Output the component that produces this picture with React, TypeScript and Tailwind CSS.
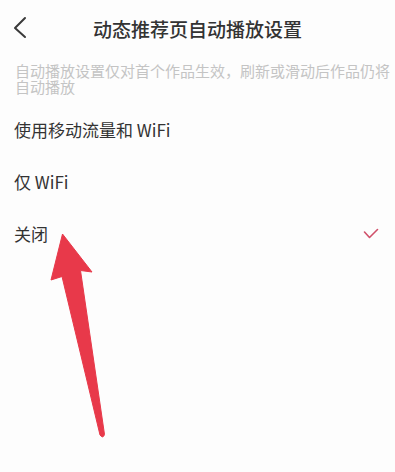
import React from "react";

const font = { fontFamily: '"Noto Sans CJK SC", "Noto Sans", sans-serif' };

export default function App() {
  return (
    <div className="relative w-[395px] h-[472px] bg-[#fdfdfd] overflow-hidden" style={font}>
      <div className="relative h-14 flex items-center justify-center">
        <svg className="absolute left-[12px] top-[16px]" width="16" height="24" viewBox="0 0 16 24">
          <polyline points="13,2 3,12 13,21" fill="none" stroke="#3a3a3a" strokeWidth="2" strokeLinecap="round" strokeLinejoin="round" />
        </svg>
        <span className="text-[19px] font-medium text-[#333333] leading-none">动态推荐页自动播放设置</span>
      </div>
      <div className="pt-[7px] pl-[15px] pr-[2px] text-[15px] leading-[16px] text-[#c4c4c4]">
        自动播放设置仅对首个作品生效，刷新或滑动后作品仍将自动播放
      </div>
      <div className="mt-[9px] flex flex-col">
        <div className="h-[52px] flex items-center px-[14px] text-[17px] text-[#333333]">使用移动流量和 WiFi</div>
        <div className="h-[52px] flex items-center px-[14px] text-[17px] text-[#333333]">仅 WiFi</div>
        <div className="h-[52px] flex items-center justify-between px-[14px] text-[17px] text-[#333333]">
          <span>关闭</span>
          <svg width="16" height="12" viewBox="0 0 16 12" className="mr-[2px]">
            <polyline points="1.5,4 6.5,9.5 14.5,1.5" fill="none" stroke="#d0506a" strokeWidth="1.6" strokeLinecap="round" strokeLinejoin="round" />
          </svg>
        </div>
      </div>
      <svg className="absolute left-0 top-0 pointer-events-none" width="395" height="472" viewBox="0 0 395 472">
        <path
          d="M62.5 234 L92 272 L80.5 270.5 L104.5 434.5 Q103 439 100 435 L62 276.5 L51 280 Z"
          fill="#e8394a"
          stroke="#e8394a"
          strokeWidth="1"
          strokeLinejoin="round"
        />
      </svg>
    </div>
  );
}
